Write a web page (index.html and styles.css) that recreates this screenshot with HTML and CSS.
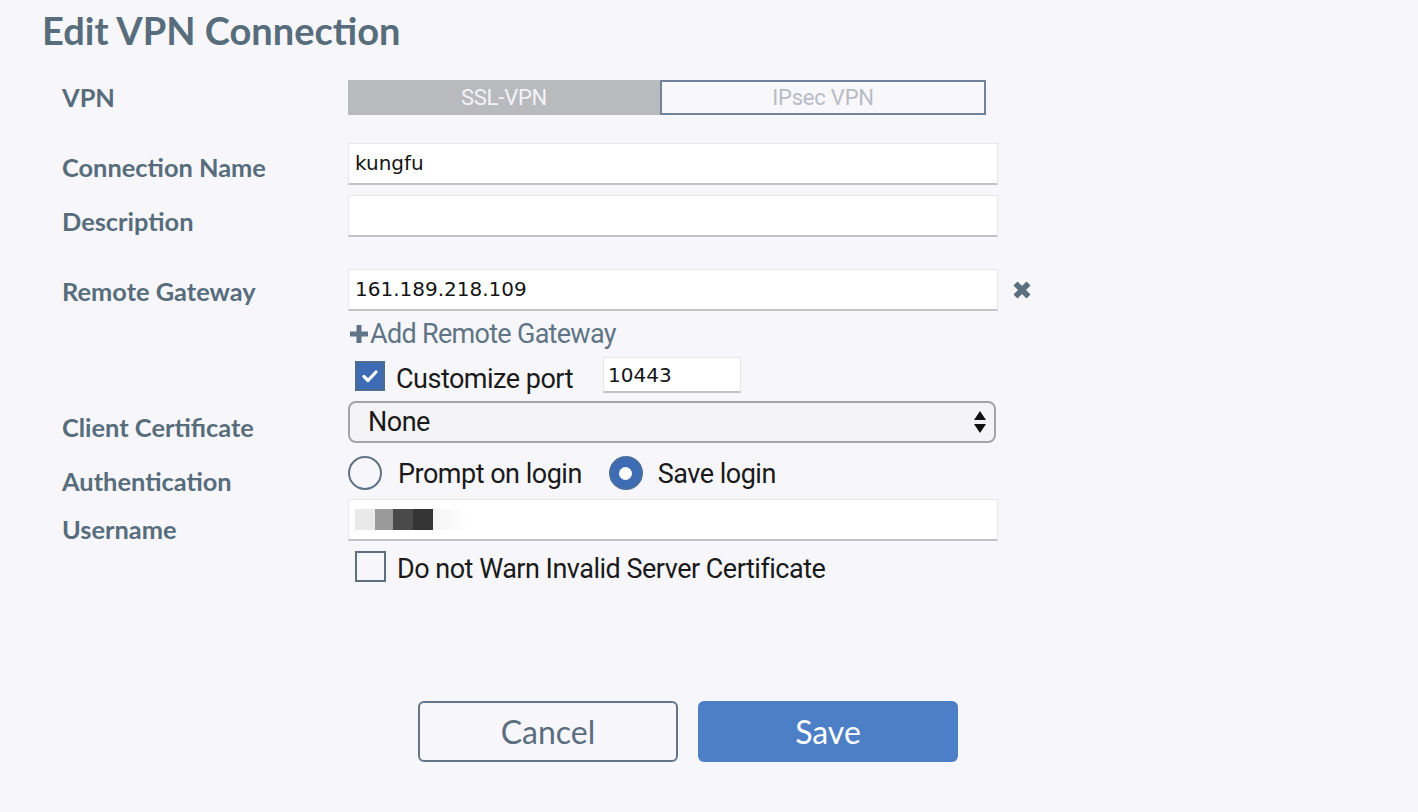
FILE: index.html
```html
<!DOCTYPE html>
<html>
<head>
<meta charset="utf-8">
<link rel="stylesheet" href="styles.css">
</head>
<body>
<div class="page">
  <h1 class="title">Edit VPN Connection</h1>
  <div class="form">
    <div class="row row-vpn">
      <div class="label">VPN</div>
      <div class="seg">
        <div class="seg-btn seg-on">SSL-VPN</div>
        <div class="seg-btn seg-off">IPsec VPN</div>
      </div>
    </div>
    <div class="row row-name">
      <div class="label off3">Connection Name</div>
      <div class="input">kungfu</div>
    </div>
    <div class="row row-desc">
      <div class="label off5">Description</div>
      <div class="input"></div>
    </div>
    <div class="row row-gw">
      <div class="label off1">Remote Gateway</div>
      <div class="input">161.189.218.109</div>
      <svg class="x-icon" viewBox="0 0 18 18" width="18" height="18"><path d="M1.5 4.5 L4.5 1.5 L9 6 L13.5 1.5 L16.5 4.5 L12 9 L16.5 13.5 L13.5 16.5 L9 12 L4.5 16.5 L1.5 13.5 L6 9 Z" fill="#5d7080" stroke="#5d7080" stroke-width="1.5" stroke-linejoin="round"/></svg>
    </div>
    <div class="row row-add">
      <div class="label"></div>
      <div class="add"><svg class="plus" viewBox="0 0 20 20" width="20" height="20"><path d="M7.5 1h5v6.5H19v5h-6.5V19h-5v-6.5H1v-5h6.5z" fill="#5f7585"/></svg>Add Remote Gateway</div>
    </div>
    <div class="row row-port">
      <div class="label"></div>
      <div class="check-wrap">
        <span class="check check-on"><svg viewBox="0 0 20 20" width="20" height="20"><path d="M4 10.5l4 4 8-8.5" fill="none" stroke="#fff" stroke-width="3.2" stroke-linecap="round" stroke-linejoin="round"/></svg></span>
        <span class="opt-text">Customize port</span>
      </div>
      <div class="port">10443</div>
    </div>
    <div class="row row-cert">
      <div class="label off5">Client Certificate</div>
      <div class="select"><span class="opt-text">None</span><svg class="arrows" viewBox="0 0 12 22" width="12" height="22"><path d="M6 0L12 9H0z M0 13H12L6 22z" fill="#111"/></svg></div>
    </div>
    <div class="row row-auth">
      <div class="label off8">Authentication</div>
      <div class="radio"></div>
      <span class="opt-text radio-text">Prompt on login</span>
      <div class="radio radio-on"></div>
      <span class="opt-text">Save login</span>
    </div>
    <div class="row row-user">
      <div class="label off9">Username</div>
      <div class="input user-input">
        <span class="blur b1"></span><span class="blur b2"></span><span class="blur b3"></span><span class="blur b4"></span><span class="blur b5"></span>
      </div>
    </div>
    <div class="row row-warn">
      <div class="label"></div>
      <div class="check-wrap">
        <span class="check"></span>
        <span class="opt-text">Do not Warn Invalid Server Certificate</span>
      </div>
    </div>
  </div>
  <div class="actions">
    <button class="btn btn-cancel">Cancel</button>
    <button class="btn btn-save">Save</button>
  </div>
</div>
</body>
</html>
```
FILE: styles.css
```css
html, body {
  margin: 0;
  padding: 0;
  background: #f7f7fb;
}
.page {
  width: 1418px;
  height: 812px;
  overflow: hidden;
}
.title {
  margin: 0;
  padding: 7px 0 0 42px;
  font-family: Lato, "Noto Sans", sans-serif;
  font-weight: 700;
  font-size: 38px;
  line-height: 46px;
  color: #586d7c;
}
.form {
  margin-left: 62px;
  display: flex;
  flex-direction: column;
}
.row {
  display: flex;
  align-items: center;
}
.label {
  width: 286px;
  flex: none;
  font-family: Lato, "Noto Sans", sans-serif;
  font-weight: 700;
  font-size: 25.4px;
  line-height: 29px;
  color: #586d7c;
}
.off1 { padding-top: 2px; }
.off3 { padding-top: 6px; }
.off5 { padding-top: 10px; }
.off8 { padding-top: 16px; }
.off9 { padding-top: 18px; }

.row-vpn { margin-top: 27px; height: 35px; }
.row-name { margin-top: 28px; height: 42px; }
.row-desc { margin-top: 10px; height: 42px; }
.row-gw { margin-top: 32px; height: 42px; }
.row-add { margin-top: 5px; height: 36px; }
.row-port { margin-top: 5px; height: 36px; }
.row-cert { margin-top: 8px; height: 42px; }
.row-auth { margin-top: 13px; height: 34px; }
.row-user { margin-top: 9px; height: 42px; }
.row-warn { margin-top: 6px; height: 32px; align-items: flex-start; }

.seg {
  display: flex;
  height: 35px;
}
.seg-btn {
  display: flex;
  align-items: center;
  justify-content: center;
  box-sizing: border-box;
  height: 35px;
  font-family: Roboto, "Liberation Sans", sans-serif;
  font-size: 22px;
  letter-spacing: -0.2px;
}
.seg-on {
  width: 312px;
  background: #b9babe;
  color: #f4f4f8;
}
.seg-off {
  width: 326px;
  border: 2px solid #70839a;
  color: #b9bcc6;
  background: #f8f8fb;
}
.input {
  box-sizing: border-box;
  width: 650px;
  height: 42px;
  background: #fff;
  border: 1px solid #e6e6ec;
  border-bottom: 2px solid #c3c3c8;
  padding: 0 0 1px 6px;
  display: flex;
  align-items: center;
  font-family: "DejaVu Sans", sans-serif;
  font-size: 20px;
  color: #151515;
}
.x-icon {
  margin-left: 15px;
}
.add {
  display: flex;
  align-items: center;
  margin-left: 1px;
  font-family: Roboto, "Liberation Sans", sans-serif;
  font-size: 27px;
  letter-spacing: -0.7px;
  color: #5f7585;
}
.plus {
  margin-right: 1px;
}
.check-wrap {
  display: flex;
  align-items: center;
  margin-left: 7px;
}
.check {
  box-sizing: border-box;
  width: 31px;
  height: 31px;
  border: 2px solid #5d7080;
  display: flex;
  align-items: center;
  justify-content: center;
  flex: none;
}
.check-on {
  width: 30px;
  height: 30px;
  background: #3d6bb4;
  border-color: #4f6b8e;
}
.opt-text {
  font-family: Roboto, "Liberation Sans", sans-serif;
  font-size: 27px;
  letter-spacing: -0.5px;
  color: #1a1a1a;
}
.check-wrap .opt-text {
  margin-left: 11px;
  padding-top: 6px;
}
.row-port .check-wrap { align-self: flex-start; }
.port {
  box-sizing: border-box;
  margin-left: 30px;
  width: 138px;
  height: 36px;
  background: #fff;
  border: 1px solid #e6e6ec;
  border-bottom: 2px solid #c3c3c8;
  padding-left: 4px;
  display: flex;
  align-items: center;
  font-family: "DejaVu Sans", sans-serif;
  font-size: 20px;
  color: #151515;
}
.select {
  box-sizing: border-box;
  width: 648px;
  height: 42px;
  border: 2px solid #a4a4a8;
  border-radius: 8px;
  background: #f4f4f6;
  display: flex;
  align-items: center;
  justify-content: space-between;
  padding: 0 8px 0 18px;
}
.radio {
  box-sizing: border-box;
  width: 34px;
  height: 34px;
  border-radius: 50%;
  border: 2px solid #5f7384;
  flex: none;
}
.radio-on {
  background: #3d6cb4;
  border-color: #4a6f9f;
  display: flex;
  align-items: center;
  justify-content: center;
}
.radio-on::after {
  content: "";
  width: 13px;
  height: 13px;
  border-radius: 50%;
  background: #fff;
}
.row-auth .opt-text {
  margin-left: 15px;
  padding-top: 2px;
}
.row-auth .radio-text {
  margin-left: 16px;
  margin-right: 27px;
}
.user-input {
  padding-left: 6px;
}
.blur {
  display: block;
  width: 20px;
  height: 21px;
}
.b1 { background: #e9e9e9; }
.b2 { background: #9a9a9a; width: 18px; }
.b3 { background: #4a4a4a; }
.b4 { background: #353535; }
.b5 { background: linear-gradient(90deg, #f4f4f4, #fff); width: 36px; }

.actions {
  display: flex;
  gap: 20px;
  margin: 122px 0 0 418px;
}
.btn {
  box-sizing: border-box;
  width: 260px;
  height: 61px;
  border-radius: 6px;
  font-family: Lato, "Noto Sans", sans-serif;
  font-size: 32px;
  padding: 0;
  cursor: pointer;
}
.btn-cancel {
  background: #f7f7fb;
  border: 2px solid #62768a;
  color: #5a6e7e;
}
.btn-save {
  background: #4d7fc7;
  border: none;
  color: #fff;
}
```
